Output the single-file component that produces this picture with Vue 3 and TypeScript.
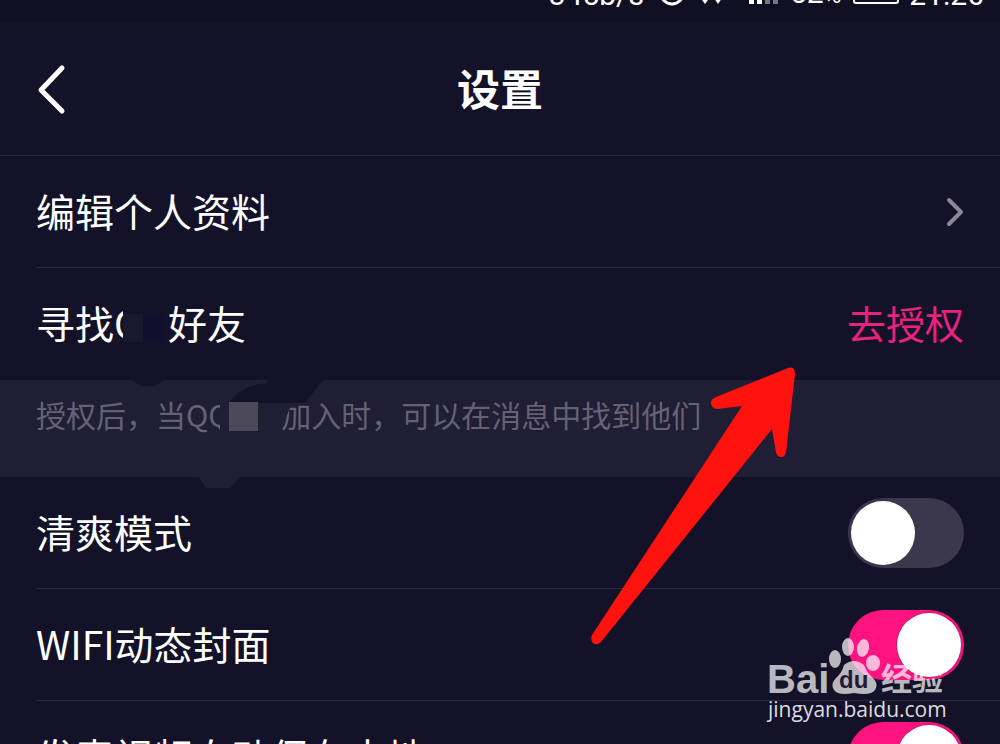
<script setup lang="ts">
import { ref } from 'vue'

interface ToggleRow {
  id: string
  label: string
  on: boolean
}

const toggles = ref<ToggleRow[]>([
  { id: 'clean-mode', label: '清爽模式', on: false },
  { id: 'wifi-cover', label: 'WIFI动态封面', on: true },
  { id: 'auto-save', label: '发表视频自动保存本地', on: true },
])
</script>

<template>
  <main class="screen">
    <div class="status">
      <span class="speed">345b/s</span>
      <svg class="alarm" width="28" height="28" viewBox="0 0 28 28">
        <circle cx="14" cy="14" r="11" fill="none" stroke="#fff" stroke-width="3" />
      </svg>
      <svg class="wifi" width="28" height="24" viewBox="0 0 28 24">
        <path d="M6 20h6l-3 4zM18 18h8l-4 6z" fill="#fff" />
      </svg>
      <svg class="signal" width="32" height="24" viewBox="0 0 32 24">
        <path d="M1 16h5v8H1zM9 10h5v14H9z" fill="#fff" />
        <path d="M17 5h5v19h-5zM25 0h5v24h-5z" fill="#77748a" />
      </svg>
      <span class="percent">52<small>%</small></span>
      <svg class="battery" width="46" height="24" viewBox="0 0 46 24">
        <rect x="1" y="1" width="44" height="22" rx="2" fill="none" stroke="#fff" stroke-width="2" />
      </svg>
      <span class="clock">21:26</span>
    </div>

    <header class="header">
      <button class="back" type="button" aria-label="返回">
        <svg width="32" height="52" viewBox="0 0 32 52">
          <path d="M28 5 7 27 28 48" fill="none" stroke="#fff" stroke-width="5" stroke-linecap="round" stroke-linejoin="round" />
        </svg>
      </button>
      <h1>设置</h1>
    </header>

    <a class="row lined" href="#profile">
      <span>编辑个人资料</span>
      <svg class="next" width="20" height="32" viewBox="0 0 20 32">
        <path d="M3 4 15 16 3 28" fill="none" stroke="#8b8998" stroke-width="4" stroke-linecap="round" stroke-linejoin="round" />
      </svg>
    </a>

    <div class="row">
      <span class="friends">寻找<span class="cut">Q</span><i class="tile light"></i><i class="tile deep"></i>好友</span>
      <button class="authorize" type="button">去授权</button>
    </div>

    <section class="note">
      <svg class="shade" width="330" height="112" viewBox="0 0 330 112">
        <path d="M132 0H164Q148 13 132 0ZM228 23Q244 4 267 3V0H323L305 23Z" fill="#141228" />
        <path d="M198 96H241L230 108H206Z" fill="#201e35" />
      </svg>
      <p>授权后，当Q<span class="cut">Q</span><i class="block"></i><span class="rest">加入时，可以在消息中找到他们</span></p>
    </section>

    <div v-for="item in toggles" :key="item.id" class="row lined">
      <label :for="item.id">{{ item.label }}</label>
      <input :id="item.id" v-model="item.on" class="switch" type="checkbox" />
    </div>

    <svg class="arrow" width="210" height="286" viewBox="0 0 210 286">
      <path d="M198 8Q205 6 205 14L196 92Q195 97 191 97Q187 97 186 92L182 69L11 282Q7 286 3 283Q0 280 2 275L152 46L127 49Q121 48 121 43Q121 39 126 37Z" fill="#ff130f" />
    </svg>

    <svg class="watermark" width="200" height="100" viewBox="0 0 200 100">
      <g fill="#fff" opacity="0.7">
        <text class="latin" x="7" y="63">Bai</text>
        <ellipse cx="75" cy="29" rx="6" ry="9" />
        <ellipse cx="88" cy="17" rx="6" ry="9" />
        <ellipse cx="103" cy="18" rx="6" ry="9" transform="rotate(12 103 18)" />
        <ellipse cx="113" cy="33" rx="7" ry="8" />
        <path d="M84 35Q94 27 104 35Q107 43 113 48Q119 54 115 60Q111 66 94 63Q78 66 74 60Q70 54 76 48Q82 43 84 35Z" />
        <text class="cjk" x="121" y="60">经验</text>
      </g>
      <text class="du" x="79" y="58">du</text>
      <text class="site" x="8" y="87">jingyan.baidu.com</text>
    </svg>
  </main>
</template>

<style>
body {
  margin: 0;
  background: #141228;
}
</style>

<style scoped>
.screen {
  position: relative;
  height: 100vh;
  overflow: hidden;
  background: #141228;
  color: #fff;
  font-family: "Noto Sans CJK SC", sans-serif;
  font-size: 39px;
}
.status {
  box-sizing: border-box;
  display: flex;
  align-items: flex-end;
  justify-content: flex-end;
  height: 22px;
  padding: 0 16px 12px 0;
  overflow: hidden;
  background: #110f22;
  font: 30px/30px Roboto, sans-serif;
}
.status span,
.status svg {
  flex: none;
}
.status small {
  font-size: 24px;
}
.alarm {
  margin: 0 10px 3px 14px;
}
.wifi {
  margin-bottom: 6px;
}
.signal {
  margin: 0 10px 6px 24px;
}
.battery {
  margin: 0 10px 6px 12px;
}
.header {
  box-sizing: border-box;
  display: grid;
  grid-template-columns: 1fr auto 1fr;
  align-items: center;
  height: 134px;
  padding: 0 34px;
  border-bottom: 1px solid #29273c;
}
.header h1 {
  margin: 0;
  padding-bottom: 4px;
  font-size: 43px;
  font-weight: 700;
  line-height: 60px;
}
button {
  padding: 0;
  border: 0;
  background: none;
  color: inherit;
  font: inherit;
}
.back {
  justify-self: start;
  display: flex;
}
.row {
  position: relative;
  box-sizing: border-box;
  display: flex;
  align-items: center;
  justify-content: space-between;
  height: 112px;
  padding: 0 36px;
  color: #fff;
  line-height: 56px;
  text-decoration: none;
}
.row > span,
.row > label,
.row > button {
  padding-bottom: 4px;
}
.lined::after {
  content: "";
  position: absolute;
  right: 0;
  bottom: 0;
  left: 36px;
  height: 1px;
  background: #2a283d;
}
.next {
  margin-right: -2px;
}
.friends {
  display: flex;
  align-items: center;
}
.cut {
  overflow: hidden;
}
.friends .cut {
  width: 9px;
}
.tile {
  height: 28px;
  margin-top: 12px;
}
.light {
  width: 20px;
  background: #1a182e;
}
.deep {
  width: 21px;
  margin-right: 4px;
  background: #110f2b;
}
.authorize {
  color: #e6237d;
  line-height: 56px;
}
.note {
  position: relative;
  height: 97px;
  background: #201e35;
  color: #646174;
  font-size: 30px;
}
.shade {
  position: absolute;
  top: 0;
  left: 0;
}
.note p {
  position: relative;
  display: flex;
  align-items: center;
  margin: 0;
  padding: 12px 36px 0;
  line-height: 44px;
  white-space: nowrap;
}
.note .cut {
  width: 12px;
}
.block {
  width: 29px;
  height: 29px;
  margin: 4px 23px 0 9px;
  background: #4b4859;
}
.rest {
  clip-path: polygon(16px 0, 100% 0, 100% 100%, 0 100%, 0 36px);
}
.switch {
  appearance: none;
  box-sizing: border-box;
  flex: none;
  width: 116px;
  height: 70px;
  margin: 0;
  padding: 3px;
  border-radius: 35px;
  background: #3b384e;
}
.switch::before {
  content: "";
  display: block;
  width: 64px;
  height: 64px;
  border-radius: 50%;
  background: #fff;
}
.switch:checked {
  background: #ff137f;
}
.switch:checked::before {
  margin-left: auto;
  box-shadow: 0 0 0 1px #c51c70;
}
.arrow {
  position: absolute;
  top: 360px;
  right: 200px;
}
.watermark {
  position: absolute;
  top: 630px;
  right: 40px;
}
.latin {
  font: 700 40px "Liberation Sans", sans-serif;
}
.cjk {
  font: 700 31px "Noto Sans CJK SC", sans-serif;
}
.du {
  fill: #211b38;
  font: 700 24px "Liberation Sans", sans-serif;
}
.site {
  fill: #dcdbe1;
  font: 500 21px "Open Sans", sans-serif;
}
</style>
